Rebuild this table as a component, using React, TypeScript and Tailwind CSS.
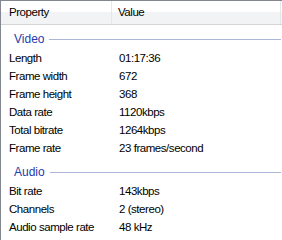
import React from 'react';

type Row = { label: string; value: string };

const groups: { title: string; rows: Row[] }[] = [
  {
    title: 'Video',
    rows: [
      { label: 'Length', value: '01:17:36' },
      { label: 'Frame width', value: '672' },
      { label: 'Frame height', value: '368' },
      { label: 'Data rate', value: '1120kbps' },
      { label: 'Total bitrate', value: '1264kbps' },
      { label: 'Frame rate', value: '23 frames/second' },
    ],
  },
  {
    title: 'Audio',
    rows: [
      { label: 'Bit rate', value: '143kbps' },
      { label: 'Channels', value: '2 (stereo)' },
      { label: 'Audio sample rate', value: '48 kHz' },
    ],
  },
];

const App = () => {
  return (
    <div
      className="w-[282px] h-[240px] overflow-hidden bg-white border-t border-l border-[#828790] text-[11.5px] tracking-[-0.45px] text-black"
      style={{ fontFamily: '"Liberation Sans", Arial, sans-serif' }}
    >
      {/* column header */}
      <div className="flex h-[24px] border-b border-[#d5d5d5] bg-gradient-to-b from-white from-50% to-[#f2f3f5] to-50%">
        <div className="w-[111px] flex items-center pl-[8px] border-r border-[#e3e8ee]">Property</div>
        <div className="flex-1 flex items-center pl-[6px] border-r border-[#e3e8ee]">Value</div>
        <div className="w-[1px]" />
      </div>

      {groups.map((g) => (
        <div key={g.title}>
          {/* group header */}
          <div className="flex items-center h-[22px] mt-[3px] pl-[13px] pr-[1px]">
            <span className="text-[12px] tracking-normal text-[#1e3cad]">{g.title}</span>
            <div className="flex-1 h-px ml-[5px] bg-[#a9b6d6]" />
          </div>
          {g.rows.map((r) => (
            <div key={r.label} className="flex h-[18px] items-center">
              <div className="w-[111px] pl-[8px]">{r.label}</div>
              <div className="flex-1 pl-[7px]">{r.value}</div>
            </div>
          ))}
        </div>
      ))}
    </div>
  );
};

export default App;
